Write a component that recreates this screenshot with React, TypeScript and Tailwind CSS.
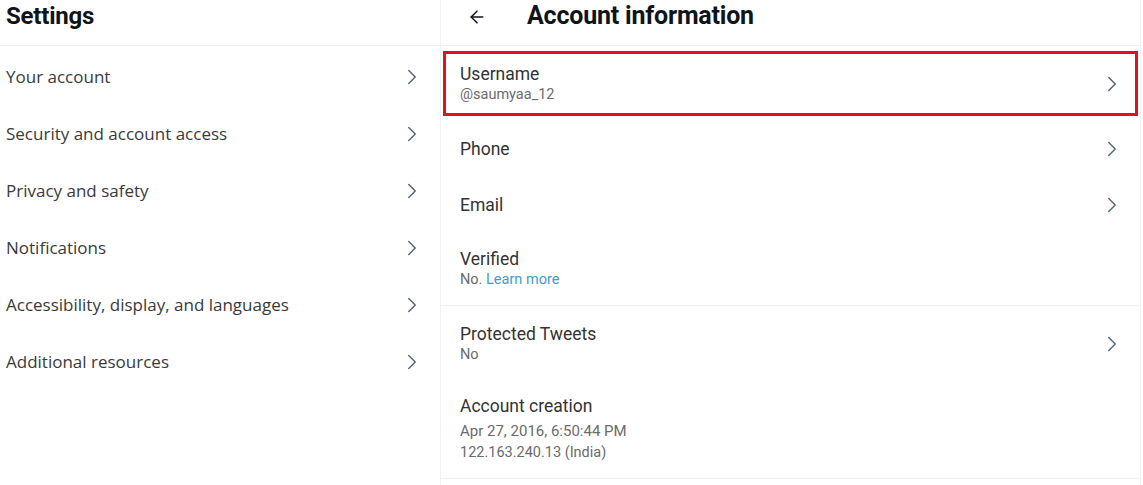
import { ChevronRight, ArrowLeft } from "lucide-react";

const menu = [
  "Your account",
  "Security and account access",
  "Privacy and safety",
  "Notifications",
  "Accessibility, display, and languages",
  "Additional resources",
];

function Chevron() {
  return <ChevronRight className="h-[26px] w-[26px] text-[#536471]" strokeWidth={1.3} />;
}

export default function App() {
  return (
    <div className="flex h-[485px] w-[1143px] bg-white font-['Open_Sans',sans-serif] text-[#333]">
      {/* left: settings list */}
      <div className="w-[441px] border-r border-[#eff3f4]">
        <div className="h-[46px] border-b border-[#eceff1] pl-[6px] pt-[1px]">
          <h1 className="font-['Roboto',sans-serif] text-[24px] leading-[30px] font-bold tracking-[-0.2px] text-[#0f1419]">
            Settings
          </h1>
        </div>
        <ul className="pt-[2px]">
          {menu.map((m) => (
            <li key={m} className="flex h-[57px] items-center justify-between pl-[6px] pr-[15px]">
              <span className="text-[17px] text-[#3a3a3a]">{m}</span>
              <Chevron />
            </li>
          ))}
        </ul>
      </div>

      {/* right: account information */}
      <div className="w-[700px] border-r border-[#eff3f4] font-['Roboto',sans-serif]">
        <div className="flex h-[46px] items-start border-b border-[#eceff1] pl-[26px] pt-[1px]">
          <ArrowLeft className="mt-[6px] h-[20px] w-[20px] text-[#0f1419]" strokeWidth={1.8} />
          <h2 className="ml-[40px] text-[25px] leading-[30px] font-bold tracking-[-0.2px] text-[#0f1419]">
            Account information
          </h2>
        </div>

        <div className="h-[75px] px-[2px] py-[5px]">
          <div className="flex h-full items-center justify-between border-[3px] border-[#e0121d] pl-[14px] pr-[10px]">
            <div className="flex flex-col">
              <span className="text-[17.5px] leading-[20px]">Username</span>
              <span className="mt-[2px] text-[14.5px] leading-[18px] text-[#6b6b6b]">@saumyaa_12</span>
            </div>
            <Chevron />
          </div>
        </div>

        <div className="flex h-[56px] items-center justify-between pl-[19px] pr-[15px]">
          <span className="text-[17.5px]">Phone</span>
          <Chevron />
        </div>
        <div className="flex h-[56px] items-center justify-between pl-[19px] pr-[15px]">
          <span className="text-[17.5px]">Email</span>
          <Chevron />
        </div>

        <div className="flex h-[73px] flex-col justify-center border-b border-[#eff3f4] pl-[19px]">
          <span className="text-[17.5px] leading-[20px]">Verified</span>
          <span className="mt-[2px] text-[14.5px] leading-[18px] text-[#6b6b6b]">
            No. <span className="text-[#3f9ad6]">Learn more</span>
          </span>
        </div>

        <div className="flex h-[75px] items-center justify-between pl-[19px] pr-[15px]">
          <div className="flex flex-col">
            <span className="text-[17.5px] leading-[20px]">Protected Tweets</span>
            <span className="mt-[2px] text-[14.5px] leading-[18px] text-[#6b6b6b]">No</span>
          </div>
          <Chevron />
        </div>

        <div className="flex h-[98px] flex-col justify-center border-b border-[#eff3f4] pl-[19px]">
          <span className="text-[17.5px] leading-[20px]">Account creation</span>
          <span className="mt-[4px] text-[15px] leading-[22px] text-[#6b6b6b]">Apr 27, 2016, 6:50:44 PM</span>
          <span className="text-[14.5px] leading-[22px] text-[#6b6b6b]">122.163.240.13 (India)</span>
        </div>
      </div>
    </div>
  );
}
